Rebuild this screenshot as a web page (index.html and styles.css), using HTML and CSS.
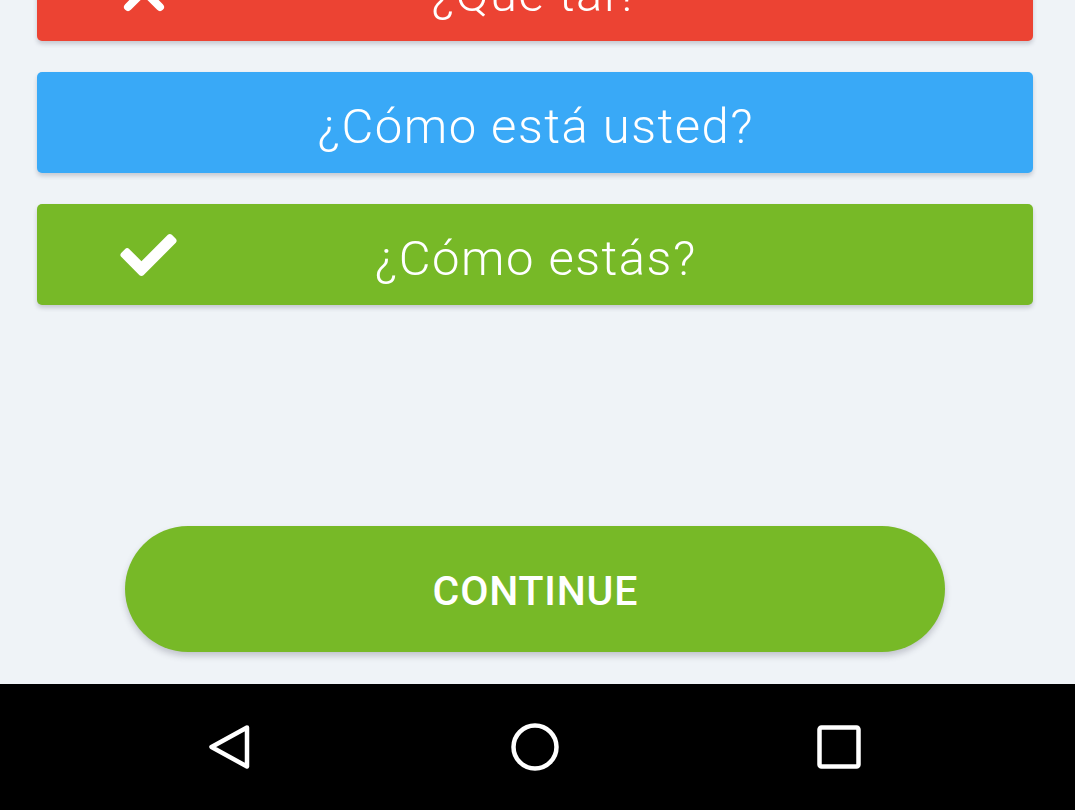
FILE: index.html
```html
<!DOCTYPE html>
<html lang="es">
<head>
<meta charset="utf-8">
<title>Quiz</title>
<link rel="stylesheet" href="styles.css">
</head>
<body>
<div class="screen">
  <main class="content">
    <div class="options">
      <div class="option option-wrong">
        <span class="icon-cell">
          <svg class="icon-x" viewBox="0 0 44 44"><path d="M6 6L38 38M38 6L6 38" stroke="#fff" stroke-width="8" stroke-linecap="round" fill="none"/></svg>
        </span>
        <span class="label">¿Qué tal?</span>
        <span class="filler"></span>
      </div>
      <div class="option option-neutral">
        <span class="icon-cell"></span>
        <span class="label">¿Cómo está usted?</span>
        <span class="filler"></span>
      </div>
      <div class="option option-right">
        <span class="icon-cell">
          <svg class="icon-check" viewBox="0 65 512 382"><path fill="#fff" d="M173.898 439.404l-166.4-166.4c-9.997-9.997-9.997-26.206 0-36.204l36.203-36.204c9.997-9.998 26.207-9.998 36.204 0L192 312.69 432.095 72.596c9.997-9.997 26.207-9.997 36.204 0l36.203 36.204c9.997 9.997 9.997 26.206 0 36.204l-294.4 294.401c-9.998 9.997-26.207 9.997-36.204-.001z"/></svg>
        </span>
        <span class="label">¿Cómo estás?</span>
        <span class="filler"></span>
      </div>
    </div>
    <div class="spacer"></div>
    <button class="continue">CONTINUE</button>
  </main>
  <nav class="navbar">
    <svg class="nav-icon" viewBox="0 0 48 48"><path d="M40 4.5L4.5 24L40 43.5Z" fill="none" stroke="#fff" stroke-width="4.5" stroke-linejoin="round"/></svg>
    <svg class="nav-icon" viewBox="0 0 48 48"><circle cx="24" cy="24" r="21.5" fill="none" stroke="#fff" stroke-width="4.5"/></svg>
    <svg class="nav-icon" viewBox="0 0 48 48"><rect x="4.5" y="4.5" width="39" height="39" rx="2" fill="none" stroke="#fff" stroke-width="4.5"/></svg>
  </nav>
</div>
</body>
</html>
```

FILE: styles.css
```css
html, body {
  margin: 0;
  padding: 0;
}
body {
  background: #eff3f7;
  font-family: Roboto, "Noto Sans", "Liberation Sans", sans-serif;
  overflow: hidden;
}
.screen {
  width: 1075px;
  height: 810px;
  display: flex;
  flex-direction: column;
}
.content {
  flex: 1;
  display: flex;
  flex-direction: column;
  align-items: center;
  padding-right: 5px;
}
.options {
  margin-top: -60px;
  display: flex;
  flex-direction: column;
  gap: 31px;
}
.option {
  width: 996px;
  height: 101px;
  border-radius: 5px;
  display: grid;
  grid-template-columns: 1fr auto 1fr;
  align-items: center;
  color: #fff;
  box-shadow: 0 3px 4px rgba(60, 60, 80, 0.22);
}
.option-wrong { background: #ec4333; }
.option-neutral { background: #39a9f7; }
.option-right { background: #77b927; }
.icon-cell {
  display: flex;
  align-items: center;
  padding-left: 83px;
}
.icon-check {
  width: 57px;
  height: 42px;
}
.icon-x {
  width: 44px;
  height: 44px;
  margin-left: 2px;
}
.label {
  font-weight: 300;
  font-size: 49px;
  letter-spacing: 1.5px;
  padding-left: 1.5px;
  line-height: 1;
  padding-top: 7px;
  white-space: nowrap;
}
.spacer {
  flex: 1;
}
.continue {
  width: 820px;
  height: 126px;
  margin-bottom: 32px;
  border: none;
  border-radius: 63px;
  background: #77b927;
  color: #fff;
  font-family: Roboto, "Noto Sans", "Liberation Sans", sans-serif;
  font-weight: 500;
  font-size: 41px;
  letter-spacing: 0.8px;
  padding: 4px 0 0 0.8px;
  box-shadow: 0 4px 6px rgba(60, 60, 80, 0.25);
}
.navbar {
  height: 126px;
  background: #000;
  display: flex;
  justify-content: center;
  align-items: center;
  gap: 256px;
  padding-right: 6px;
}
.nav-icon {
  width: 48px;
  height: 48px;
}
```
